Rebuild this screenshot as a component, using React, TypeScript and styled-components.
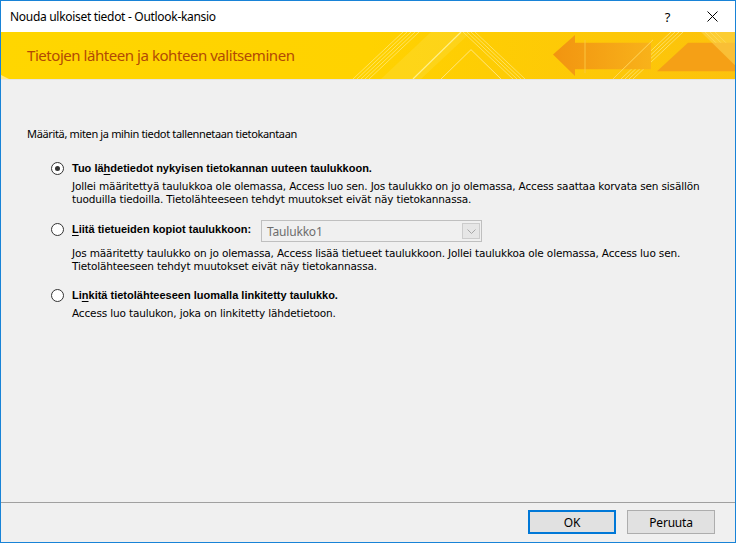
import React from 'react'
import styled, { createGlobalStyle } from 'styled-components'

const GlobalStyle = createGlobalStyle`
  html, body {
    margin: 0;
    padding: 0;
    background: #ffffff;
  }
  * {
    box-sizing: border-box;
  }
`

const Window = styled.div`
  display: flex;
  flex-direction: column;
  width: 736px;
  height: 543px;
  border: 1px solid #1883d7;
  background: #f0f0f0;
  font-family: 'DejaVu Sans', Verdana, sans-serif;
  font-size: 10.5px;
  letter-spacing: -0.15px;
  color: #000000;
  overflow: hidden;
`

const TitleBar = styled.div`
  display: flex;
  align-items: center;
  height: 31px;
  padding-left: 9px;
  background: #ffffff;
`

const TitleText = styled.div`
  flex: 1;
  font-family: 'Noto Sans', 'Open Sans', sans-serif;
  font-size: 12px;
  letter-spacing: -0.3px;
  padding-bottom: 1px;
`

const TitleButton = styled.div`
  display: flex;
  align-items: center;
  justify-content: center;
  width: 45px;
  height: 31px;
  font-family: 'Noto Sans', sans-serif;
  font-size: 13px;
  color: #000000;
`

const Banner = styled.div`
  position: relative;
  display: flex;
  align-items: center;
  height: 48px;
  padding-left: 26px;
  border-bottom: 1px solid #e4e4e4;
  overflow: hidden;
`

const BannerArt = styled.svg`
  position: absolute;
  left: 0;
  top: 0;
  width: 100%;
  height: 100%;
`

const BannerTitle = styled.div`
  position: relative;
  font-family: 'Noto Sans', 'Open Sans', sans-serif;
  font-size: 15px;
  letter-spacing: -0.45px;
  color: #b24a05;
  padding-bottom: 1px;
`

const Content = styled.div`
  flex: 1;
  display: flex;
  flex-direction: column;
  padding: 46px 26px 0 26px;
`

const Intro = styled.div`
  font-family: 'Noto Sans', 'Open Sans', sans-serif;
  font-size: 11px;
  letter-spacing: -0.35px;
  line-height: 15px;
  margin-bottom: 19px;
`

const Option = styled.div<{ $gap: number }>`
  display: flex;
  flex-direction: column;
  margin: ${(p) => p.$gap}px 0 0 24px;
`

const OptionRow = styled.div`
  display: flex;
  align-items: center;
  min-height: 16px;
`

const Radio = styled.span<{ $checked?: boolean }>`
  display: flex;
  align-items: center;
  justify-content: center;
  width: 13px;
  height: 13px;
  margin-right: 8px;
  border: 1px solid #333333;
  border-radius: 50%;
  background: #ffffff;

  &::after {
    content: '';
    display: ${(p) => (p.$checked ? 'block' : 'none')};
    width: 5px;
    height: 5px;
    border-radius: 50%;
    background: #333333;
  }
`

const Label = styled.span`
  font-family: 'Liberation Sans', Arial, sans-serif;
  font-size: 11px;
  font-weight: bold;
  letter-spacing: 0;
  line-height: 14px;

  u {
    text-underline-offset: 2px;
  }
`

const Description = styled.div<{ $top: number }>`
  margin: ${(p) => p.$top}px 0 0 21px;
  line-height: 13px;
  white-space: nowrap;
`

const Combo = styled.div`
  display: flex;
  align-items: center;
  width: 221px;
  height: 22px;
  margin: 4px 0 0 10px;
  padding: 0 1px 0 5px;
  border: 1px solid #bfbfbf;
  background: #f0f0f0;
  color: #6d6d6d;
  font-family: 'Noto Sans', sans-serif;
  font-size: 12px;
  letter-spacing: -0.2px;
`

const ComboValue = styled.span`
  flex: 1;
`

const ComboButton = styled.span`
  display: flex;
  align-items: center;
  justify-content: center;
  width: 18px;
  height: 16px;
  border: 1px solid #cccccc;
  background: #e6e6e6;
`

const Footer = styled.div`
  display: flex;
  justify-content: flex-end;
  gap: 11px;
  height: 40px;
  padding: 7px 20px 0 0;
  border-top: 1px solid #a0a0a0;
`

const Button = styled.div<{ $default?: boolean }>`
  display: flex;
  align-items: center;
  justify-content: center;
  width: 88px;
  height: 24px;
  border: ${(p) => (p.$default ? '2px solid #0078d7' : '1px solid #adadad')};
  background: #e1e1e1;
  font-family: 'Noto Sans', sans-serif;
  font-size: 12px;
  letter-spacing: -0.2px;
`

const BannerDrawing = () => (
  <BannerArt viewBox="0 0 734 48" preserveAspectRatio="none">
    <defs>
      <linearGradient id="base" x1="0" x2="1" y1="0" y2="0">
        <stop offset="0" stopColor="#ffd600" />
        <stop offset="0.5" stopColor="#ffd200" />
        <stop offset="1" stopColor="#fcc20c" />
      </linearGradient>
      <linearGradient id="arrow" x1="0" x2="1" y1="0" y2="0">
        <stop offset="0" stopColor="#f29410" />
        <stop offset="1" stopColor="#f8b21a" />
      </linearGradient>
    </defs>
    <rect width="734" height="48" fill="url(#base)" />
    <polygon points="380,48 430,0 470,0 420,48" fill="#fde35a" opacity="0.25" />
    <g stroke="#ffec8a" strokeWidth="1" opacity="0.7">
      <line x1="352" y1="48" x2="402" y2="0" />
      <line x1="356" y1="48" x2="406" y2="0" />
      <line x1="360" y1="48" x2="410" y2="0" />
      <line x1="364" y1="48" x2="414" y2="0" />
      <line x1="368" y1="48" x2="418" y2="0" />
      <line x1="462" y1="0" x2="512" y2="48" />
      <line x1="466" y1="0" x2="516" y2="48" />
      <line x1="470" y1="0" x2="520" y2="48" />
      <line x1="474" y1="0" x2="524" y2="48" />
      <line x1="620" y1="48" x2="670" y2="0" />
      <line x1="624" y1="48" x2="674" y2="0" />
      <line x1="628" y1="48" x2="678" y2="0" />
      <line x1="632" y1="48" x2="682" y2="0" />
      <line x1="704" y1="0" x2="734" y2="30" />
      <line x1="709" y1="0" x2="734" y2="25" />
      <line x1="714" y1="0" x2="734" y2="20" />
    </g>
    <line x1="412" y1="48" x2="460" y2="0" stroke="#fff08c" strokeWidth="1.2" />
    <line x1="440" y1="48" x2="470" y2="18" stroke="#ffe680" strokeWidth="1" />
    <line x1="470" y1="18" x2="500" y2="48" stroke="#ffe680" strokeWidth="1" />
    <polygon points="552,23 574,3 574,11 650,11 650,38 574,38 574,45" fill="url(#arrow)" />
    <line x1="584" y1="8" x2="584" y2="42" stroke="#fbc640" strokeWidth="1" />
    <line x1="612" y1="48" x2="652" y2="8" stroke="#ffd860" strokeWidth="1" />
    <polygon points="656,40 687,11 734,11 734,40" fill="#f5a016" />
    <polygon points="700,0 734,0 734,34" fill="#fbd34c" opacity="0.6" />
    <polygon points="0,44 8,48 0,48" fill="#ffe98a" />
  </BannerArt>
)

const CloseIcon = () => (
  <svg width="11" height="11" viewBox="0 0 11 11">
    <path d="M0.5 0.5 L10.5 10.5 M10.5 0.5 L0.5 10.5" stroke="#000" strokeWidth="1" />
  </svg>
)

const Chevron = () => (
  <svg width="9" height="5" viewBox="0 0 9 5">
    <path d="M0.5 0.5 L4.5 4.5 L8.5 0.5" fill="none" stroke="#a6a6a6" strokeWidth="1" />
  </svg>
)

export default function App() {
  return (
    <>
      <GlobalStyle />
      <Window>
        <TitleBar>
          <TitleText>Nouda ulkoiset tiedot - Outlook-kansio</TitleText>
          <TitleButton>?</TitleButton>
          <TitleButton>
            <CloseIcon />
          </TitleButton>
        </TitleBar>
        <Banner>
          <BannerDrawing />
          <BannerTitle>Tietojen lähteen ja kohteen valitseminen</BannerTitle>
        </Banner>
        <Content>
          <Intro>Määritä, miten ja mihin tiedot tallennetaan tietokantaan</Intro>
          <Option $gap={0}>
            <OptionRow>
              <Radio $checked />
              <Label>
                Tuo lä<u>h</u>detiedot nykyisen tietokannan uuteen taulukkoon.
              </Label>
            </OptionRow>
            <Description $top={4}>
              Jollei määritettyä taulukkoa ole olemassa, Access luo sen. Jos taulukko on jo olemassa, Access saattaa korvata sen sisällön
              <br />
              tuoduilla tiedoilla. Tietolähteeseen tehdyt muutokset eivät näy tietokannassa.
            </Description>
          </Option>
          <Option $gap={10}>
            <OptionRow>
              <Radio />
              <Label>
                <u>L</u>iitä tietueiden kopiot taulukkoon:
              </Label>
              <Combo>
                <ComboValue>Taulukko1</ComboValue>
                <ComboButton>
                  <Chevron />
                </ComboButton>
              </Combo>
            </OptionRow>
            <Description $top={5}>
              Jos määritetty taulukko on jo olemassa, Access lisää tietueet taulukkoon. Jollei taulukkoa ole olemassa, Access luo sen.
              <br />
              Tietolähteeseen tehdyt muutokset eivät näy tietokannassa.
            </Description>
          </Option>
          <Option $gap={14}>
            <OptionRow>
              <Radio />
              <Label>
                Li<u>n</u>kitä tietolähteeseen luomalla linkitetty taulukko.
              </Label>
            </OptionRow>
            <Description $top={4}>Access luo taulukon, joka on linkitetty lähdetietoon.</Description>
          </Option>
        </Content>
        <Footer>
          <Button $default>OK</Button>
          <Button>Peruuta</Button>
        </Footer>
      </Window>
    </>
  )
}
